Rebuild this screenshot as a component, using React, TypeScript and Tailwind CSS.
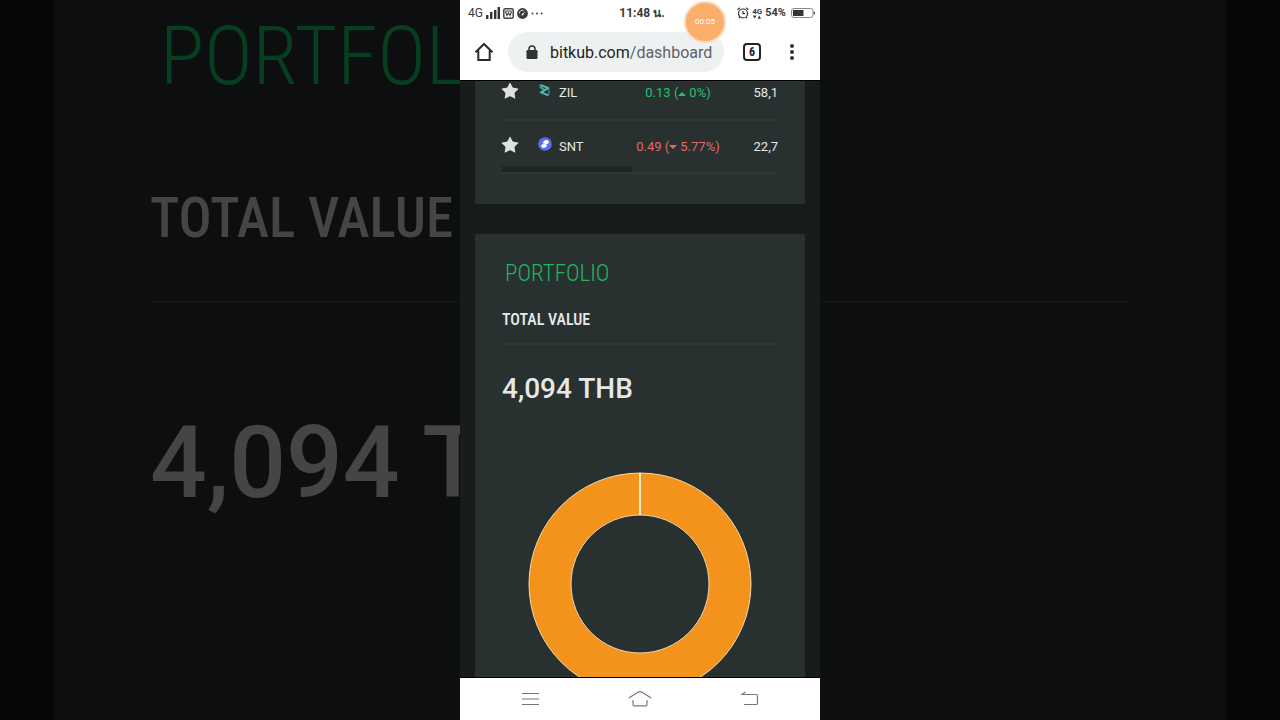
import { Star } from "lucide-react";
import type { ReactNode } from "react";

type Coin = {
  symbol: string;
  price: string;
  change: string;
  up: boolean;
  volume: string;
  icon: ReactNode;
};

const narrow = "font-['Roboto_Condensed','Liberation_Sans_Narrow',Roboto,sans-serif]";

function ZilIcon() {
  return (
    <svg width="14" height="14" viewBox="0 0 14 14" fill="none" strokeWidth="2" strokeLinejoin="round">
      <path d="M11 5.4V12" stroke="#2c6f70" />
      <path d="M2.600 2 10.300 5.200 3 9.400l7.400 3" stroke="#55bab4" />
      <path d="M2.600 1.600v2.800l3.400 2" stroke="#3f9c98" />
    </svg>
  );
}

function SntIcon() {
  return (
    <svg width="14" height="14" viewBox="0 0 14 14">
      <circle cx="7" cy="7" r="6.8" fill="#5b6dee" />
      <path d="M5 6.4C5 4.4 6.6 3 8.6 3c1.3 0 2.2.8 2.2 1.9C10.8 6.3 9.6 7 8.2 7 7 7 6.2 6.5 5 6.4Z" fill="#fff" />
      <path d="M9 7.6C9 9.6 7.4 11 5.4 11 4.1 11 3.2 10.2 3.2 9.1 3.2 7.7 4.4 7 5.8 7 7 7 7.8 7.5 9 7.6Z" fill="#fff" />
    </svg>
  );
}

const coins: Coin[] = [
  { symbol: "ZIL", price: "0.13", change: "0%", up: true, volume: "58,1", icon: <ZilIcon /> },
  { symbol: "SNT", price: "0.49", change: "5.77%", up: false, volume: "22,7", icon: <SntIcon /> },
];

// dimmed, enlarged copy of the portfolio card on both sides of the phone
function BackdropLeft() {
  return (
    <div aria-hidden="true" className="min-w-0 flex-1 overflow-hidden pl-[53px]">
      <div className="h-full bg-[#0c0e0f] pl-[97px] whitespace-nowrap text-[#454545]">
        <p className={`${narrow} pl-2.5 text-[82px] leading-[112px] font-light text-[#063f20]`}>PORTFOL</p>
        <p className={`${narrow} mt-[66px] border-b-2 border-[#111314] pb-[43px] text-[55px] leading-[80px] font-medium`}>
          TOTAL VALUE
        </p>
        <p className="mt-[104px] text-[100px] leading-[112px] font-medium">4,094 T</p>
      </div>
    </div>
  );
}

function BackdropRight() {
  return (
    <div aria-hidden="true" className="min-w-0 flex-1 pr-[53px]">
      <div className="h-full bg-[#0c0e0f] pr-24">
        <div className="h-[303px] border-b-2 border-[#111314]" />
      </div>
    </div>
  );
}

function StatusBar() {
  return (
    <div className="flex h-6 items-center px-2 pt-0.5 text-[#3a3a3a]">
      <div className="flex flex-1 items-center gap-[3px]">
        <span className="text-xs">4G</span>
        <svg width="14" height="12" viewBox="0 0 14 12" fill="#333">
          <path d="M0 8h2.400v4H0zM4 5h2.400v7H4zM8 3h2.400v9H8zM11.600 0H14v12h-2.400z" />
        </svg>
        <svg width="11" height="11" viewBox="0 0 11 11" fill="none" stroke="#444">
          <rect x=".8" y=".8" width="9.4" height="9.4" rx="1.5" strokeWidth="1.5" />
          <path d="M2.500 3.500 4 7.500 5.500 5 7 7.500 8.500 3.500M2.500 3h6" strokeWidth="1.2" />
        </svg>
        <svg width="11" height="11" viewBox="0 0 11 11">
          <circle cx="5.5" cy="5.5" r="5.4" fill="#3c3c3c" />
          <path d="M2.200 5.500a3.300 3.300 0 0 1 4.500-3" stroke="#ddd" fill="none" />
          <path d="m4.300 6.700 4.200-3.500-3 4.500z" fill="#fff" />
        </svg>
        <svg width="12" height="3" viewBox="0 0 12 3" fill="#444">
          <circle cx="1.5" cy="1.5" r="1" />
          <circle cx="6" cy="1.5" r="1" />
          <circle cx="10.5" cy="1.5" r="1" />
        </svg>
      </div>
      <span className="text-xs font-bold">11:48 น.</span>
      <div className="-mr-1 flex flex-1 items-center justify-end gap-[3px]">
        <svg width="12" height="12" viewBox="0 0 12 12" fill="none" stroke="#333" strokeWidth="1.2">
          <circle cx="6" cy="6.5" r="4.5" />
          <path d="M6 4v2.700h2M.6 2.800 2.800.8M11.400 2.800 9.200.8M2.800 10.200l-1 1M9.200 10.200l1 1" />
        </svg>
        <span className="flex flex-col items-center text-[8px] leading-[7px] font-bold">
          4G
          <svg width="8" height="4" viewBox="0 0 8 4" fill="#333">
            <path d="M0 .5h3.400L1.700 3.800zM4.600 3.800H8L6.300.5z" />
          </svg>
        </span>
        <span className="text-[11px] font-bold">54%</span>
        <svg width="25" height="10" viewBox="0 0 25 10" className="ml-0.5">
          <rect x=".5" y=".5" width="21.5" height="9" rx="2.5" fill="none" stroke="#888" />
          <path d="M2 2h10.500v6H2z" fill="#333" />
          <path d="M22.800 3.200c1.600.5 1.600 3.100 0 3.600z" fill="#333" />
        </svg>
      </div>
    </div>
  );
}

function BrowserBar() {
  return (
    <div className="flex h-14 items-center pr-6 pl-3.5">
      <button type="button" aria-label="Home" className="mr-3.5">
        <svg width="20" height="20" viewBox="0 0 20 20" fill="none" stroke="#2b2b2b" strokeWidth="2">
          <path d="M1.500 10.200 10 2l8.500 8.200M4.300 8.500V18h11.400V8.500" />
        </svg>
      </button>
      <button
        type="button"
        className="flex h-10 min-w-0 flex-1 items-center rounded-full bg-[#eef1f2] pt-px pl-[18px] text-base whitespace-nowrap"
      >
        <svg width="12" height="15" viewBox="0 0 12 15" className="mr-3 shrink-0">
          <rect x=".5" y="5" width="11" height="9" rx="1.2" fill="#333" />
          <path d="M3 5.500V4a3 3 0 0 1 6 0v1.500" fill="none" stroke="#333" strokeWidth="1.5" />
        </svg>
        <span className="text-[#1d1f20]">bitkub.com</span>
        <span className="text-[#5f6265]">/dashboard</span>
      </button>
      <button
        type="button"
        aria-label="Open tabs"
        className={`${narrow} ml-[19px] flex size-[18px] items-center justify-center rounded border-2 border-[#222] text-xs font-bold text-[#222]`}
      >
        6
      </button>
      <button type="button" aria-label="Menu" className="ml-[27px]">
        <svg width="8" height="18" viewBox="0 0 8 18" fill="#333">
          <circle cx="4" cy="3" r="2" />
          <circle cx="4" cy="9" r="2" />
          <circle cx="4" cy="15" r="2" />
        </svg>
      </button>
    </div>
  );
}

function MarketCard() {
  return (
    <section className="rounded-b-xs bg-[#283130] px-[27px] pb-[30px]">
      {/* list is scrolled a little, so the first row starts above the edge */}
      <div className="relative -mt-3.5">
        <table className="w-full table-fixed border-collapse text-[13px] text-[#e6e8e8]">
          <colgroup>
            <col className="w-9" />
            <col className="w-[82px]" />
            <col />
            <col className="w-[42px]" />
          </colgroup>
          <tbody>
            {coins.map((c) => (
              <tr key={c.symbol} className="h-[53px] border-b-2 border-[#2f3837]">
                <td>
                  <button type="button" aria-label={`Favourite ${c.symbol}`} className="-ml-0.5 block pb-1">
                    <Star size={20} fill="#dfe1e2" strokeWidth={0} />
                  </button>
                </td>
                <td>
                  <span className="flex items-center gap-[7px]">
                    <span className="pb-1.5">{c.icon}</span>
                    {c.symbol}
                  </span>
                </td>
                <td className={`text-center whitespace-nowrap ${c.up ? "text-[#21c26b]" : "text-[#e26a68]"}`}>
                  {c.price} (
                  <svg width="8" height="4" viewBox="0 0 8 4" fill="currentColor" className="mr-[3px] inline-block align-middle">
                    <path d={c.up ? "M0 4 4 0l4 4z" : "M0 0h8L4 4z"} />
                  </svg>
                  {c.change})
                </td>
                <td className="text-right">{c.volume}</td>
              </tr>
            ))}
          </tbody>
        </table>
        <div className="absolute bottom-0.5 left-0 h-1.5 w-[47%] rounded-tr-sm bg-[#1f2726]" />
      </div>
    </section>
  );
}

function PortfolioCard() {
  return (
    <section className="mt-[30px] rounded-t-xs bg-[#283130] px-[27px] pt-6">
      <h2 className={`${narrow} pl-[3px] text-[23px] leading-8 font-light text-[#22b463]`}>PORTFOLIO</h2>
      <h3 className={`${narrow} mt-[18px] border-b-2 border-[#2f3837] pb-[11px] text-base leading-6 font-medium text-[#e9ebeb]`}>
        TOTAL VALUE
      </h3>
      <p className="mt-7 text-[28px] leading-8 font-medium text-[#e6e8e8]">4,094 THB</p>
      <svg viewBox="0 0 224 224" className="mx-auto mt-[67px] block w-[224px]" role="img" aria-label="Portfolio allocation">
        <circle cx="112" cy="112" r="90" fill="none" stroke="#f3931c" strokeWidth="42" />
        <g fill="none" stroke="#f5d9ae">
          <circle cx="112" cy="112" r="111" />
          <circle cx="112" cy="112" r="69" />
        </g>
        <path d="M112 1v42" stroke="#fbe9c8" strokeWidth="2" />
      </svg>
    </section>
  );
}

function NavBar() {
  return (
    <nav className="flex h-[42px] shrink-0 items-center justify-between bg-white px-[58px]">
      <button type="button" aria-label="Recent apps">
        <svg width="24" height="18" viewBox="0 0 24 18" stroke="#777" strokeWidth="1.2">
          <path d="M4 3.500h17M4 9h17M4 14.500h17" />
        </svg>
      </button>
      <button type="button" aria-label="Home screen">
        <svg width="24" height="18" viewBox="0 0 24 18" fill="none" stroke="#777" strokeWidth="1.2">
          <path d="M.8 8 10 2.200Q12 1.200 14 2.200L23.200 8M5 10v4.500q0 1.300 1.300 1.300h11.400q1.300 0 1.300-1.300V10" />
        </svg>
      </button>
      <button type="button" aria-label="Back">
        <svg width="24" height="18" viewBox="0 0 24 18" fill="none" stroke="#777" strokeWidth="1.2">
          <path d="M7.500 2 4 4.500h14.200q1.300 0 1.300 1.300v7.400q0 1.300-1.300 1.300H6" />
        </svg>
      </button>
    </nav>
  );
}

export default function App() {
  return (
    <div className="flex h-screen overflow-hidden bg-[#050706] font-[Roboto,'Noto_Sans',sans-serif]">
      <BackdropLeft />
      <div className="relative flex aspect-[1/2] h-full shrink-0 flex-col bg-[#181d1b]">
        <header className="shrink-0 bg-white">
          <StatusBar />
          <BrowserBar />
        </header>
        <main className="min-h-0 flex-1 overflow-hidden border-y border-black px-[15px]">
          <MarketCard />
          <PortfolioCard />
        </main>
        <NavBar />
        <div className="absolute top-px left-[224px] flex size-[42px] items-center justify-center rounded-full border-2 border-[#fbd9b8] bg-[#f9ae6b] text-[8px] text-white">
          00:05
        </div>
      </div>
      <BackdropRight />
    </div>
  );
}
